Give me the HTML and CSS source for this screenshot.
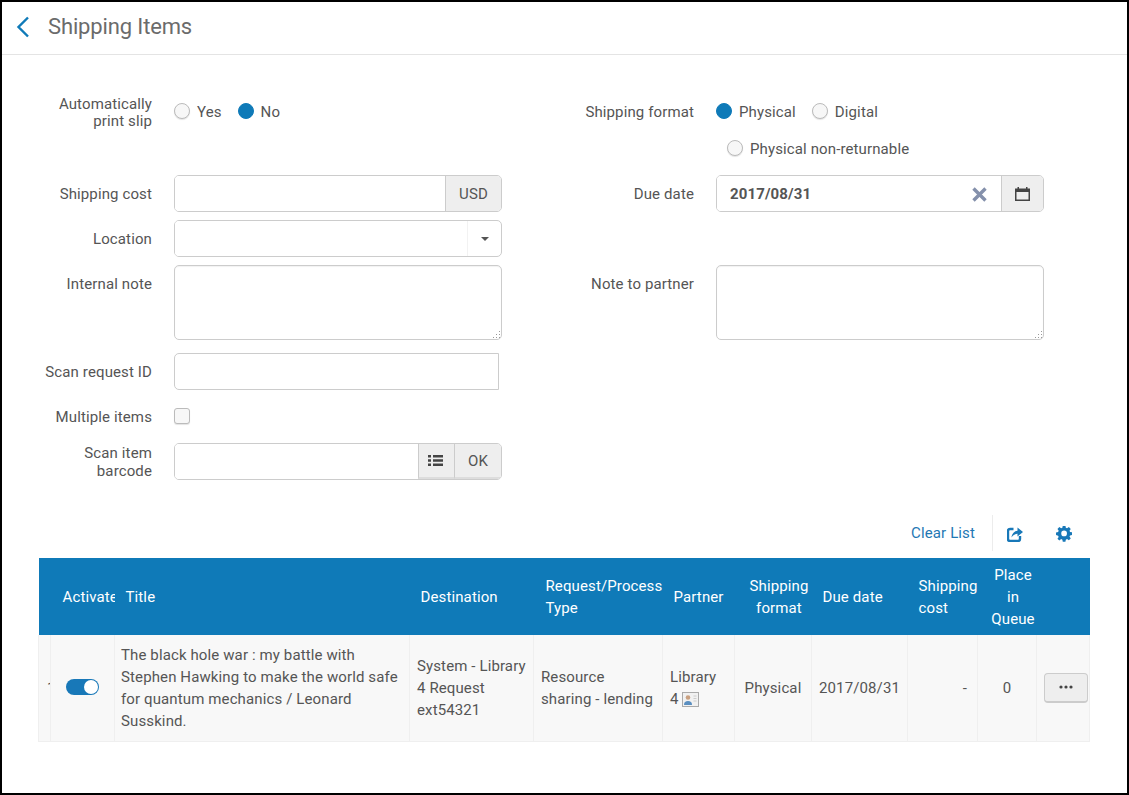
FILE: index.html
```html
<!DOCTYPE html>
<html lang="en">
<head>
    <meta charset="UTF-8">
    <title>Shipping Items</title>
    <link rel="stylesheet" href="styles.css">
</head>
<body>
    <div class="page">
        <header class="page-header">
            <svg class="back-icon" width="14" height="22" viewBox="0 0 14 22"><path d="M12 1.500 L2.500 11 L12 20.500" fill="none" stroke="#0f7ab8" stroke-width="2.400"/></svg>
            <h1>Shipping Items</h1>
        </header>

        <form class="form">
            <div class="form-col">
                <div class="field field-print">
                    <label class="field-label">Automatically print slip</label>
                    <div class="radios">
                        <span class="radio"></span><span class="radio-text">Yes</span>
                        <span class="radio checked"></span><span class="radio-text">No</span>
                    </div>
                </div>
                <div class="field field-cost">
                    <label class="field-label">Shipping cost</label>
                    <div class="input-group">
                        <div class="input"></div>
                        <div class="addon addon-usd">USD</div>
                    </div>
                </div>
                <div class="field field-location">
                    <label class="field-label">Location</label>
                    <div class="input-group">
                        <div class="input"></div>
                        <div class="select-arrow"><span class="caret"></span></div>
                    </div>
                </div>
                <div class="field field-note">
                    <label class="field-label">Internal note</label>
                    <div class="textarea">
                        <svg class="grip" width="9" height="9" viewBox="0 0 9 9"><path d="M7 1h1v1H7zM4 4h1v1H4zM7 4h1v1H7zM1 7h1v1H1zM4 7h1v1H4zM7 7h1v1H7z" fill="#999"/></svg>
                    </div>
                </div>
                <div class="field field-scan">
                    <label class="field-label">Scan request ID</label>
                    <div class="input input-scan"></div>
                </div>
                <div class="field field-multi">
                    <label class="field-label">Multiple items</label>
                    <span class="checkbox"></span>
                </div>
                <div class="field field-barcode">
                    <label class="field-label">Scan item barcode</label>
                    <div class="input-group">
                        <div class="input"></div>
                        <div class="addon addon-list">
                            <svg width="15" height="11" viewBox="0 0 15 11"><path d="M0 0h3v2.400H0zM5 0h10v2.400H5zM0 4.300h3v2.400H0zM5 4.300h10v2.400H5zM0 8.600h3v2.400H0zM5 8.600h10v2.400H5z" fill="#444"/></svg>
                        </div>
                        <div class="addon addon-ok">OK</div>
                    </div>
                </div>
            </div>

            <div class="form-col">
                <div class="field field-format">
                    <label class="field-label">Shipping format</label>
                    <div class="radios-wrap">
                        <div class="radios">
                            <span class="radio checked"></span><span class="radio-text">Physical</span>
                            <span class="radio"></span><span class="radio-text">Digital</span>
                        </div>
                        <div class="radios radios-second">
                            <span class="radio"></span><span class="radio-text">Physical non-returnable</span>
                        </div>
                    </div>
                </div>
                <div class="field field-due">
                    <label class="field-label">Due date</label>
                    <div class="input-group">
                        <div class="input input-date">
                            <b>2017/08/31</b>
                            <svg width="15" height="15" viewBox="0 0 15 15"><path d="M1.500 1.500 L13.500 13.500 M13.500 1.500 L1.500 13.500" stroke="#8490ab" stroke-width="3.400" fill="none"/></svg>
                        </div>
                        <div class="addon addon-cal">
                            <svg width="15" height="14" viewBox="0 0 15 14"><path d="M0 1.500h2.500V0h1.500v1.500h7V0h1.500v1.500H15V14H0z M1.500 5v7.500h12V5z" fill="#444"/></svg>
                        </div>
                    </div>
                </div>
                <div class="field field-note">
                    <label class="field-label">Note to partner</label>
                    <div class="textarea">
                        <svg class="grip" width="9" height="9" viewBox="0 0 9 9"><path d="M7 1h1v1H7zM4 4h1v1H4zM7 4h1v1H7zM1 7h1v1H1zM4 7h1v1H4zM7 7h1v1H7z" fill="#999"/></svg>
                    </div>
                </div>
            </div>
        </form>

        <div class="toolbar">
            <a class="clear-list">Clear List</a>
            <span class="toolbar-sep"></span>
            <svg class="tool-icon" width="16" height="16" viewBox="0 0 16 16"><path d="M6.500 3H3a2 2 0 0 0-2 2v8a2 2 0 0 0 2 2h8a2 2 0 0 0 2-2V10" fill="none" stroke="#1878b8" stroke-width="2.400"/><path d="M4.500 11.500 C5 7.500 7.500 5 10.500 4.800V1.500L16 6 10.500 10.500V7.800C8.500 7.800 6 9 4.500 11.500z" fill="#1878b8"/></svg>
            <svg class="tool-icon tool-gear" width="16" height="16" viewBox="0 0 16 16"><path fill-rule="evenodd" d="M6.600 0h2.800l.4 2.200 1.300.6 1.900-1.300 2 2-1.300 1.900.6 1.300 2.200.4v2.800l-2.200.4-.6 1.300 1.300 1.900-2 2-1.900-1.300-1.300.6-.4 2.200H6.600l-.4-2.200-1.300-.6L3 15.800l-2-2 1.300-1.900-.6-1.300L-.5 10V7.200l2.200-.4.6-1.300L1 3.500l2-2 1.900 1.300 1.300-.6zM8 5.200a3 3 0 1 0 0 6 3 3 0 0 0 0-6z" fill="#1878b8" transform="translate(0.500 -0.400) scale(.95)"/></svg>
        </div>

        <table class="items">
            <colgroup>
                <col class="c-num"><col class="c-activate"><col class="c-title"><col class="c-dest"><col class="c-type"><col class="c-partner"><col class="c-format"><col class="c-due"><col class="c-cost"><col class="c-place"><col class="c-action">
            </colgroup>
            <thead>
                <tr>
                    <th></th>
                    <th class="th-activate"><div class="clip">Activate</div></th>
                    <th>Title</th>
                    <th>Destination</th>
                    <th class="th-type">Request/Process Type</th>
                    <th>Partner</th>
                    <th class="center">Shipping format</th>
                    <th>Due date</th>
                    <th>Shipping cost</th>
                    <th class="center">Place in Queue</th>
                    <th></th>
                </tr>
            </thead>
            <tbody>
                <tr>
                    <td class="td-num"><div class="clip-num">1</div></td>
                    <td class="center"><span class="toggle"><span class="knob"></span></span></td>
                    <td class="td-title">The black hole war : my battle with Stephen Hawking to make the world safe for quantum mechanics / Leonard Susskind.</td>
                    <td>System - Library 4 Request ext54321</td>
                    <td>Resource sharing - lending</td>
                    <td>Library 4 <svg class="contact" width="17" height="15" viewBox="0 0 17 15"><rect x=".5" y=".5" width="16" height="14" fill="#f1f1f1" stroke="#aaa"/><circle cx="6" cy="5.500" r="2.300" fill="#c9a080"/><path d="M2 13c0-3 1.500-4 4-4s4 1 4 4z" fill="#5b8fc0"/><path d="M11.500 4h3M11.500 6.500h3M11.500 9h3" stroke="#ccc"/></svg></td>
                    <td class="center">Physical</td>
                    <td class="center td-due">2017/08/31</td>
                    <td class="td-cost">-</td>
                    <td class="center">0</td>
                    <td class="td-action"><button type="button" class="more"><svg width="14" height="4" viewBox="0 0 14 4"><circle cx="2" cy="2" r="1.600" fill="#444"/><circle cx="7" cy="2" r="1.600" fill="#444"/><circle cx="12" cy="2" r="1.600" fill="#444"/></svg></button></td>
                </tr>
            </tbody>
        </table>
    </div>
</body>
</html>
```

FILE: styles.css
```css
* {
    box-sizing: border-box;
}

html, body {
    margin: 0;
    height: 100%;
}

body {
    font-family: Roboto, "Liberation Sans", sans-serif;
    font-size: 15px;
    letter-spacing: .12px;
    color: #555;
    background: #fff;
}

.page {
    height: 795px;
    border: 2px solid #000;
    overflow: hidden;
}

.page-header {
    display: flex;
    align-items: center;
    height: 53px;
    padding-left: 14px;
    border-bottom: 1px solid #e4e4e4;
}

.page-header h1 {
    margin: 0 0 3px 18px;
    font-size: 22px;
    font-weight: 400;
    letter-spacing: -.14px;
    color: #6b6b6b;
}

.back-icon {
    margin-bottom: 3px;
}

/* form */
.form {
    display: grid;
    grid-template-columns: 542px 1fr;
    height: 461px;
    padding-top: 40px;
}

.field {
    display: flex;
    align-items: flex-start;
}

.field-label {
    flex: none;
    width: 150px;
    padding-left: 20px;
    margin-right: 22px;
    text-align: right;
    line-height: 17px;
}

.form-col:last-child .field-label {
    padding-left: 0;
}

.field-print {
    height: 80px;
}

.field-print .field-label {
    margin-top: 1px;
    padding-left: 30px;
}

.field-cost {
    height: 45px;
}

.field-location {
    height: 45px;
}

.field-note {
    height: 88px;
}

.field-scan {
    height: 54px;
}

.field-multi {
    height: 36px;
    padding-top: 1px;
}

.field-multi .field-label {
    padding-top: 1px;
}

.field-cost .field-label,
.field-location .field-label,
.field-due .field-label,
.field-scan .field-label,
.field-note .field-label {
    padding-top: 11px;
}

.field-barcode .field-label {
    margin-top: 1px;
    padding-left: 30px;
    line-height: 18px;
}

.radios {
    display: flex;
    align-items: center;
    height: 20px;
    margin-top: 7px;
}

.radios-wrap {
    height: 80px;
}

.radios-second {
    margin: 17px 0 0 11px;
}

.radio {
    width: 16px;
    height: 16px;
    margin-top: -2px;
    border: 1px solid #bbb;
    border-radius: 50%;
    background: #f7f7f7;
    box-shadow: 0 1px 1px #e4e4e4;
}

.radio.checked {
    border-color: #0f7ab8;
    background: #0f7ab8;
    box-shadow: none;
}

.radio-text {
    margin: 0 16px 0 7px;
}

.field-format {
    height: 80px;
}

.field-format .field-label {
    padding-top: 9px;
}

.field-due {
    height: 90px;
}

.input-group {
    display: flex;
    width: 328px;
    height: 37px;
    border: 1px solid #ccc;
    border-radius: 5px;
    overflow: hidden;
}

.input {
    flex: 1;
    background: #fff;
}

.input-scan {
    flex: none;
    width: 325px;
    height: 37px;
    border: 1px solid #ccc;
    border-radius: 5px 0 0 5px;
}

.input-date {
    display: flex;
    align-items: center;
    justify-content: space-between;
    padding: 0 14px 0 13px;
}

.input-date svg {
    margin-top: 2px;
}

.addon {
    display: flex;
    align-items: center;
    justify-content: center;
    flex: none;
    padding-top: 1px;
    background: #eee;
    border-left: 1px solid #ccc;
    color: #555;
}

.addon-usd {
    width: 56px;
}

.addon-list {
    width: 36px;
    padding: 0 2px 0 0;
    border-bottom: 2px solid #ddd;
}

.addon-ok {
    width: 47px;
    border-bottom: 2px solid #ddd;
}

.addon-cal {
    width: 42px;
}

.select-arrow {
    display: flex;
    align-items: center;
    justify-content: center;
    width: 34px;
    border-left: 1px solid #f2f2f2;
}

.caret {
    border-left: 4px solid transparent;
    border-right: 4px solid transparent;
    border-top: 4px solid #555;
}

.textarea {
    position: relative;
    width: 328px;
    height: 75px;
    border: 1px solid #ccc;
    border-radius: 5px;
    box-shadow: inset 0 1px 1px #f2f2f2;
}

.grip {
    position: absolute;
    right: 0;
    bottom: 0;
}

.checkbox {
    width: 16px;
    height: 16px;
    border: 1px solid #bbb;
    border-radius: 3px;
    background: #f7f7f7;
    box-shadow: 0 1px 1px #e4e4e4;
}

/* toolbar */
.toolbar {
    display: flex;
    align-items: center;
    justify-content: flex-end;
    height: 42px;
    padding: 0 55px 8px 0;
}

.clear-list {
    color: #1f78b4;
}

.toolbar-sep {
    width: 1px;
    height: 36px;
    margin: 0 14px 0 17px;
    background: #ececec;
}

.tool-icon {
    margin-top: 1px;
}

.tool-gear {
    margin-left: 33px;
}

/* table */
.items {
    width: 1051px;
    margin-left: 36px;
    border-collapse: collapse;
    table-layout: fixed;
}

.c-num { width: 12px; }
.c-activate { width: 64px; }
.c-title { width: 295px; }
.c-dest { width: 124px; }
.c-type { width: 129px; }
.c-partner { width: 72px; }
.c-format { width: 77px; }
.c-due { width: 96px; }
.c-cost { width: 70px; }
.c-place { width: 59px; }
.c-action { width: 53px; }

.items th {
    height: 77px;
    padding: 0 0 0 11px;
    background: #0f7ab8;
    color: #fff;
    font-weight: 400;
    line-height: 22px;
    text-align: left;
}

.items th.th-activate {
    padding: 0 0 0 12px;
    overflow: hidden;
}

.items th.th-type {
    padding-left: 12px;
}

.items th.center {
    padding: 0 0 0 12px;
    text-align: center;
}

.clip {
    white-space: nowrap;
}

.items td {
    height: 106px;
    padding: 0 7px;
    background: #f8f8f8;
    border: 1px solid #efefef;
    border-top: 0;
    line-height: 22px;
}

.items td.td-title {
    padding: 0 6px;
}

.items td.center {
    padding: 0;
    text-align: center;
}

.td-num {
    overflow: hidden;
}

.items td.td-num {
    padding: 0 0 0 8px;
}

.items td.td-cost {
    padding-right: 10px;
    text-align: right;
}

.items td.td-action {
    padding: 0 1px 0 7px;
}

.toggle {
    position: relative;
    display: inline-block;
    width: 33px;
    height: 16px;
    margin-top: 4px;
    border-radius: 8px;
    background: #1878b8;
}

.knob {
    position: absolute;
    top: 1px;
    right: 1px;
    width: 14px;
    height: 14px;
    border-radius: 50%;
    background: #fff;
}

.contact {
    vertical-align: -3px;
}

.more {
    display: flex;
    align-items: center;
    justify-content: center;
    width: 44px;
    height: 30px;
    padding: 0;
    background: #eee;
    border: 1px solid #ccc;
    border-bottom: 2px solid #ccc;
    border-radius: 4px;
}
```
